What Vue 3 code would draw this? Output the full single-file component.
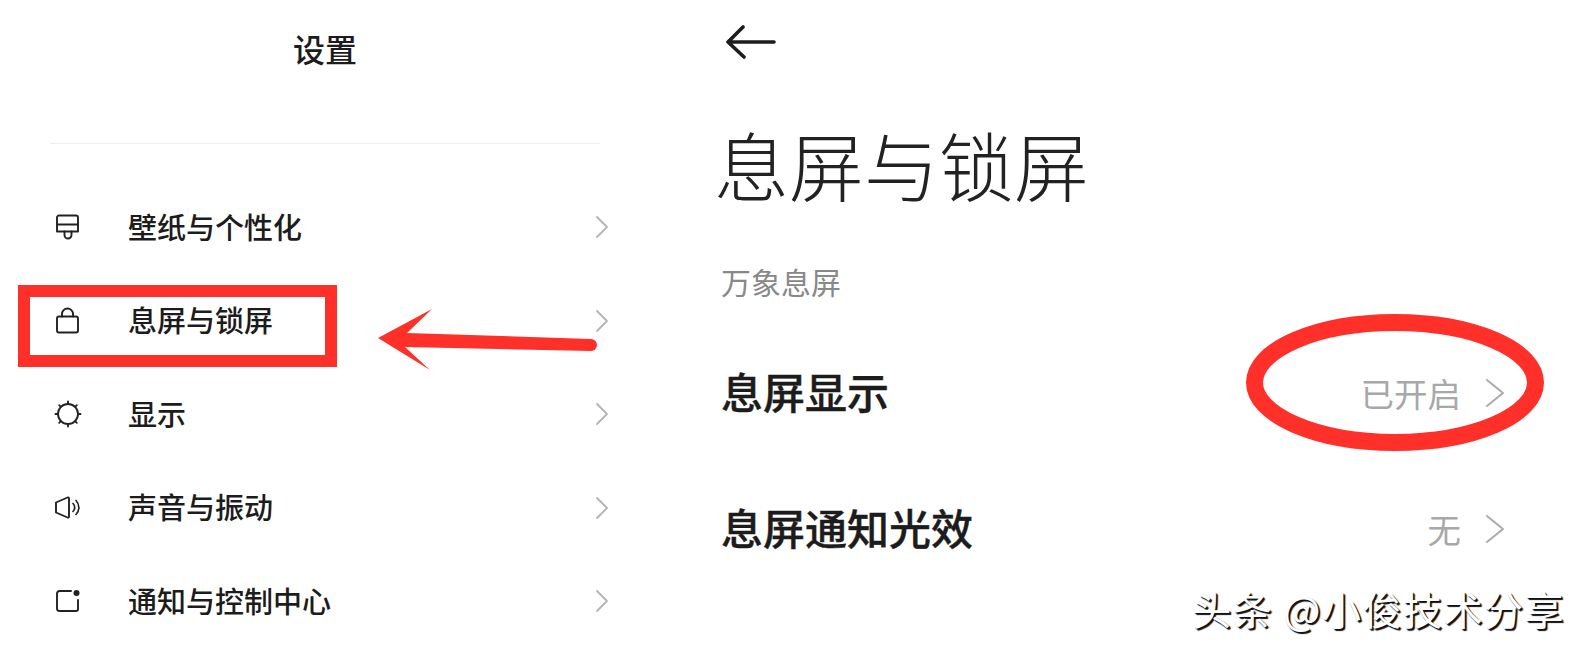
<script setup>
const menu = [
  { name: '壁纸与个性化', icon: 'brush' },
  { name: '息屏与锁屏', icon: 'lock' },
  { name: '显示', icon: 'sun' },
  { name: '声音与振动', icon: 'sound' },
  { name: '通知与控制中心', icon: 'notice' }
]

const options = [
  { name: '息屏显示', value: '已开启' },
  { name: '息屏通知光效', value: '无' }
]
</script>

<template>
  <div class="page">
    <section class="settings">
      <h1 class="settings__title">设置</h1>
      <div class="settings__line"></div>
      <ul class="menu">
        <li v-for="item in menu" :key="item.name" class="menu__row">
          <svg class="menu__icon" viewBox="0 0 30 30" fill="none" stroke="#222" stroke-width="1.9" stroke-linecap="round" stroke-linejoin="round">
            <template v-if="item.icon === 'brush'">
              <path d="M4 5.5a2 2 0 0 1 2-2h17a2 2 0 0 1 2 2v14H4z" />
              <path d="M4 12.5h21" />
              <path d="M11.500 19.500v3.500a3.500 3.500 0 0 0 7 0v-3.500" />
            </template>
            <template v-else-if="item.icon === 'lock'">
              <rect x="4" y="10.5" width="21" height="16" rx="2" />
              <path d="M9 10.5V8a5.5 5.5 0 0 1 11 0v2.5" />
            </template>
            <template v-else-if="item.icon === 'sun'">
              <circle cx="15" cy="15" r="10" />
              <path d="M15 2.5V5M15 25v2.500M2.500 15H5M25 15h2.500M6.200 6.200l1.700 1.700M23.800 6.200l-1.700 1.700M6.200 23.800l1.700-1.700M23.800 23.800l-1.700-1.700" />
            </template>
            <template v-else-if="item.icon === 'sound'">
              <path d="M3 9.500L14.500 4.500c.9-.4 1.500 0 1.500 1v18c0 1-.6 1.400-1.500 1L3 19.500z" />
              <path d="M20 10.500a5.500 5.500 0 0 1 0 8M23 7.500a10 10 0 0 1 0 14" stroke-width="1.700" />
            </template>
            <template v-else>
              <path d="M18 5H6.500A2.500 2.500 0 0 0 4 7.500v15A2.500 2.500 0 0 0 6.500 25H23a2 2 0 0 0 2-2v-9" />
              <circle cx="23.500" cy="7" r="3" fill="#222" stroke="none" />
            </template>
          </svg>
          <span class="menu__name">{{ item.name }}</span>
          <svg class="menu__chevron" viewBox="0 0 14 24" fill="none" stroke="#b4b4b4" stroke-width="1.8" stroke-linecap="round" stroke-linejoin="round">
            <path d="M2 2l10 10L2 22" />
          </svg>
        </li>
      </ul>
    </section>

    <section class="detail">
      <svg class="detail__back" viewBox="0 0 50 34" fill="none" stroke="#1c1c1c" stroke-width="3.600" stroke-linecap="round" stroke-linejoin="round">
        <path d="M2 17h46M17 2L2 17l16 15" />
      </svg>
      <h2 class="detail__title">息屏与锁屏</h2>
      <p class="detail__group">万象息屏</p>
      <div v-for="opt in options" :key="opt.name" class="option">
        <span class="option__name">{{ opt.name }}</span>
        <span class="option__value">{{ opt.value }}</span>
        <svg class="option__chevron" viewBox="0 0 20 30" fill="none" stroke="#ababab" stroke-width="2" stroke-linecap="round" stroke-linejoin="round">
          <path d="M2 2l16 13L2 28" />
        </svg>
      </div>
    </section>

    <!-- marks drawn over the screenshot -->
    <svg class="marks" viewBox="0 0 1584 651" fill="none">
      <rect x="24" y="291" width="307" height="70" stroke="#ff3029" stroke-width="12" />
      <path d="M378 338L432 309L407 333L591 339V351L405 347L430 370Z" fill="#ff3029" />
      <circle cx="591" cy="345" r="6" fill="#ff3029" />
      <ellipse cx="1395" cy="382.500" rx="140.500" ry="60" stroke="#ff3029" stroke-width="17" />
    </svg>

    <div class="watermark">头条 @小俊技术分享</div>
  </div>
</template>

<style scoped>
.page {
  position: relative;
  display: grid;
  grid-template-columns: 660px 1fr;
  width: 1584px;
  height: 651px;
  overflow: hidden;
  background: #fff;
  color: #1c1c1c;
  font-family: "Noto Sans CJK SC", "Noto Sans", sans-serif;
}

.settings {
  padding: 0 51px 0 50px;
}

.settings__title {
  margin: 0;
  padding: 27px 9px 0 0;
  height: 143px;
  box-sizing: border-box;
  font-size: 32px;
  line-height: 42px;
  font-weight: 500;
  text-align: center;
}

.settings__line {
  width: 550px;
  height: 1px;
  background: #eeeeee;
}

.menu {
  list-style: none;
  margin: 35px 0 0;
  padding: 0;
}

.menu__row {
  display: flex;
  align-items: center;
  height: 93.5px;
}

.menu__icon {
  width: 30px;
  height: 30px;
  margin: 3px 0 0 3px;
  flex: none;
}

.menu__name {
  flex: 1;
  margin-left: 45px;
  font-size: 29px;
  font-weight: 500;
  line-height: 40px;
}

.menu__chevron {
  width: 14px;
  height: 24px;
  margin-top: 3px;
  flex: none;
}

.detail {
  padding: 25px 0 0 61px;
}

.detail__back {
  display: block;
  width: 50px;
  height: 34px;
  margin-left: 5px;
}

.detail__title {
  margin: 55px 0 0 -7px;
  font-size: 75px;
  line-height: 100px;
  font-weight: 300;
  color: #222;
}

.detail__group {
  margin: 46px 0 21px;
  font-size: 30px;
  line-height: 42px;
  font-weight: 400;
  color: #888;
}

.option {
  display: flex;
  align-items: center;
  height: 136px;
  padding-right: 79px;
}

.option__name {
  flex: 1;
  font-size: 42px;
  line-height: 56px;
  font-weight: 500;
  -webkit-text-stroke: 0.4px #1c1c1c;
}

.option__value {
  margin-top: 3px;
  font-size: 33.500px;
  line-height: 44px;
  color: #a8a8a8;
}

.option__chevron {
  width: 20px;
  height: 30px;
  margin: 3px 0 0 24px;
}

.marks {
  position: absolute;
  inset: 0;
  width: 1584px;
  height: 651px;
  pointer-events: none;
}

.watermark {
  position: absolute;
  right: 19px;
  bottom: 18px;
  font-size: 39px;
  line-height: 50px;
  color: #fff;
  letter-spacing: 1.500px;
  white-space: nowrap;
  text-shadow: 2px 2px 1px #111, 1px 1px 1px #111;
}
</style>
